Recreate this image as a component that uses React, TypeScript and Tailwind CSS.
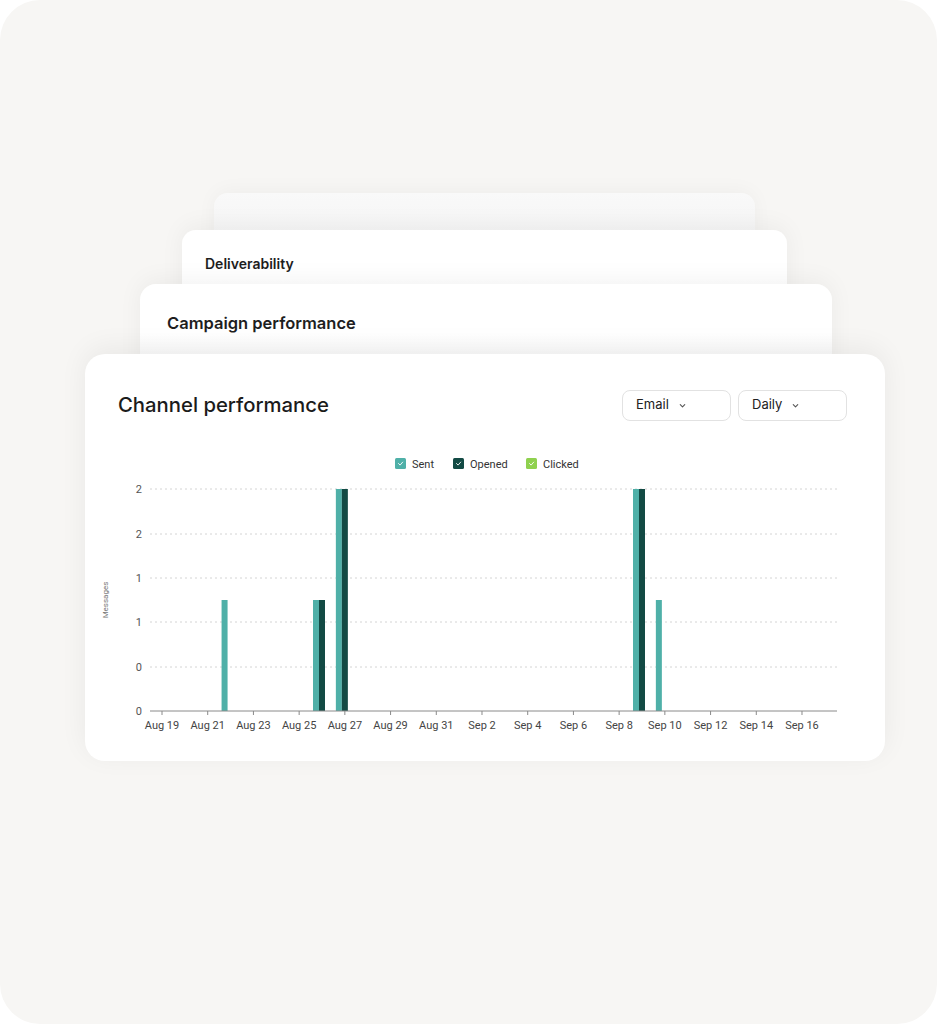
import React from 'react'

const DAY = 22.857
const X0 = 77
const gridYs = [55, 100, 144, 188, 233]
const yLabels = ['2', '2', '1', '1', '0', '0']
const xLabels = ['Aug 19', 'Aug 21', 'Aug 23', 'Aug 25', 'Aug 27', 'Aug 29', 'Aug 31', 'Sep 2', 'Sep 4', 'Sep 6', 'Sep 8', 'Sep 10', 'Sep 12', 'Sep 14', 'Sep 16']

// day index from Aug 19, sent, opened
const bars = [
  { d: 3, sent: 1, opened: 0 },
  { d: 7, sent: 1, opened: 1 },
  { d: 8, sent: 2, opened: 2 },
  { d: 21, sent: 2, opened: 2 },
  { d: 22, sent: 1, opened: 0 },
]

const AXIS = 277
const UNIT = 111

function Chevron() {
  return (
    <svg width="9" height="9" viewBox="0 0 10 10" fill="none" stroke="#555" strokeWidth="1.2" strokeLinecap="round" strokeLinejoin="round">
      <path d="M2.5 4l2.5 2.5L7.5 4" />
    </svg>
  )
}

function Dropdown({ label }: { label: string }) {
  return (
    <button className="flex items-center gap-[9px] w-[109px] h-[31px] pl-[13px] bg-white border border-[#e2e2e2] rounded-lg text-[13px] text-[#222] font-['Inter',sans-serif]">
      {label}
      <Chevron />
    </button>
  )
}

function LegendItem({ x, color, label }: { x: number; color: string; label: string }) {
  return (
    <g>
      <rect x={x} y={24} width={11} height={11} rx={1.5} fill={color} />
      <path d={`M${x + 3.5} ${29.5}l1.6 1.6 2.6-3`} stroke="#fff" strokeWidth="0.9" fill="none" strokeLinecap="round" />
      <text x={x + 17} y={33.5} fontSize="11" fill="#333" fontFamily="Roboto, sans-serif">{label}</text>
    </g>
  )
}

function Chart() {
  return (
    <svg width="800" height="320" viewBox="0 0 800 320" className="block">
      <LegendItem x={310} color="#4fb0a8" label="Sent" />
      <LegendItem x={368} color="#134a44" label="Opened" />
      <LegendItem x={441} color="#8fd14f" label="Clicked" />

      {gridYs.map(y => (
        <line key={y} x1={65} x2={752} y1={y} y2={y} stroke="#cfcfcf" strokeWidth="0.9" strokeDasharray="2 3" />
      ))}
      {[...gridYs, AXIS].map((y, i) => (
        <text key={i} x={57} y={y + 4} fontSize="11" fill="#555" textAnchor="end" fontFamily="Roboto, sans-serif">{yLabels[i]}</text>
      ))}

      <text x={23} y={166} fontSize="8" fill="#777" textAnchor="middle" transform="rotate(-90 23 166)" fontFamily="Roboto, sans-serif">Messages</text>

      {bars.map(b => {
        const c = X0 + b.d * DAY
        return (
          <g key={b.d}>
            {b.sent > 0 && <rect x={c - 9} y={AXIS - b.sent * UNIT} width={6} height={b.sent * UNIT} fill="#4fb0a8" />}
            {b.opened > 0 && <rect x={c - 3} y={AXIS - b.opened * UNIT} width={6} height={b.opened * UNIT} fill="#134a44" />}
          </g>
        )
      })}

      <line x1={65} x2={752} y1={AXIS} y2={AXIS} stroke="#8a8a8a" strokeWidth="1" />
      {xLabels.map((l, i) => {
        const x = X0 + i * DAY * 2
        return (
          <g key={l}>
            <line x1={x} x2={x} y1={AXIS} y2={AXIS + 4} stroke="#8a8a8a" strokeWidth="1" />
            <text x={x} y={295} fontSize="11" fill="#444" textAnchor="middle" fontFamily="Roboto, sans-serif">{l}</text>
          </g>
        )
      })}
    </svg>
  )
}

export default function App() {
  return (
    <div className="w-[937px] h-[1024px] bg-white">
      <div className="w-full h-full bg-[#f7f6f4] rounded-[40px] pt-[193px] flex flex-col items-start overflow-hidden">
        {/* back card */}
        <div className="ml-[214px] w-[541px] h-[80px] rounded-[14px] bg-gradient-to-b from-[#f9f9f9] to-[#f1f1f1] shadow-[0_-2px_20px_rgba(0,0,0,0.04)]" />

        {/* Deliverability */}
        <div className="ml-[182px] -mt-[43px] w-[605px] h-[100px] rounded-[14px] bg-gradient-to-b from-white via-white to-[#f1f1f1] shadow-[0_-4px_24px_rgba(0,0,0,0.05)] pl-[23px] pt-[23px]">
          <h3 className="text-[14px] font-semibold text-[#1e1e1e] font-['Inter',sans-serif]">Deliverability</h3>
        </div>

        {/* Campaign performance */}
        <div className="ml-[140px] -mt-[46px] w-[692px] h-[100px] rounded-[16px] bg-gradient-to-b from-white via-white to-[#f1f1f1] shadow-[0_-4px_24px_rgba(0,0,0,0.05)] pl-[27px] pt-[27px]">
          <h3 className="text-[16.5px] font-semibold text-[#1e1e1e] font-['Inter',sans-serif]">Campaign performance</h3>
        </div>

        {/* Channel performance */}
        <div className="ml-[85px] -mt-[30px] w-[800px] h-[407px] rounded-[20px] bg-white shadow-[0_-6px_28px_rgba(0,0,0,0.06)]">
          <div className="flex items-center justify-between pl-[33px] pr-[38px] pt-[36px] h-[66px]">
            <h2 className="text-[20.3px] font-medium text-[#1b1b1b] font-['Inter',sans-serif]">Channel performance</h2>
            <div className="flex gap-[7px]">
              <Dropdown label="Email" />
              <Dropdown label="Daily" />
            </div>
          </div>
          <div className="mt-[14px]">
            <Chart />
          </div>
        </div>
      </div>
    </div>
  )
}
